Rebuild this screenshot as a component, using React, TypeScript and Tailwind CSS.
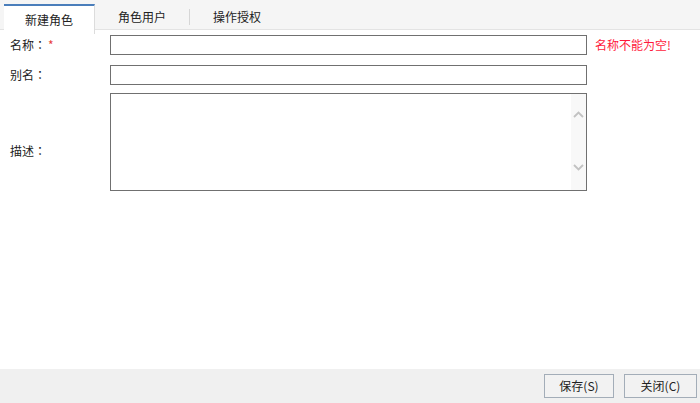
import React from 'react';

const tabs = ['新建角色', '角色用户', '操作授权'];

const fields = [
  { label: '名称', required: true, error: '名称不能为空!' },
  { label: '别名', required: false, error: '' },
];

// full-width colon with the dot centred, as in the original dialog
const Colon = () => (
  <span style={{ fontFamily: '"Noto Sans CJK TC", sans-serif' }}>：</span>
);

const App = () => {
  return (
    <div
      className="flex flex-col w-[700px] h-[403px] bg-white text-[12px] text-[#222]"
      style={{ fontFamily: '"Noto Sans CJK SC", "Microsoft YaHei", sans-serif' }}
    >
      {/* tab strip */}
      <div className="flex h-[30px] pl-[4px] bg-[#f5f5f5] border-b border-[#e3e3e3]">
        <div className="w-[91px] h-[30px] mt-[4px] -mb-px flex items-center justify-center bg-white border-t-2 border-[#4a7ebb] border-r border-r-[#dcdcdc]">
          {tabs[0]}
        </div>
        <div className="w-[94px] h-full flex items-center justify-center pt-[4px]">{tabs[1]}</div>
        <div className="w-px h-[16px] mt-[9px] bg-[#d6d6d6]" />
        <div className="w-[94px] h-full flex items-center justify-center pt-[4px]">{tabs[2]}</div>
      </div>

      {/* form */}
      <div className="flex-1 pt-[5px]">
        {fields.map((f, i) => (
          <div key={f.label} className={`flex items-center h-[20px] ${i > 0 ? 'mt-[10px]' : ''}`}>
            <div className="w-[110px] pl-[10px] flex items-center">
              {f.label}
              <Colon />
              {f.required && <span className="text-[#e8403a] ml-[2px]">*</span>}
            </div>
            <input className="w-[477px] h-[20px] border border-[#707070] outline-none" />
            {f.error && <span className="ml-[8px] text-[#ff1a3c]">{f.error}</span>}
          </div>
        ))}
        <div className="flex items-center mt-[8px]">
          <div className="w-[110px] pl-[10px] pt-[18px]">
            描述
            <Colon />
          </div>
          <div className="w-[477px] h-[98px] border border-[#707070] flex">
            <div className="flex-1" />
            <div className="w-[15px] h-full bg-[#f8f8f8] flex flex-col items-center justify-between pt-[17px] pb-[19px]">
              <svg width="11" height="7" viewBox="0 0 11 7">
                <path d="M1 6 L5.5 1.5 L10 6" stroke="#c2c2c2" strokeWidth="1.8" fill="none" />
              </svg>
              <svg width="11" height="7" viewBox="0 0 11 7">
                <path d="M1 1 L5.5 5.5 L10 1" stroke="#c2c2c2" strokeWidth="1.8" fill="none" />
              </svg>
            </div>
          </div>
        </div>
      </div>

      {/* footer */}
      <div className="h-[34px] bg-[#f0f0f0] flex items-center justify-end gap-[10px] pr-[3px]">
        <button className="w-[70px] h-[24px] border border-[#a3adb8] bg-[#f2f2f2] text-[12px]">保存(S)</button>
        <button className="w-[73px] h-[24px] border border-[#a3adb8] bg-[#f2f2f2] text-[12px]">关闭(C)</button>
      </div>
    </div>
  );
};

export default App;
